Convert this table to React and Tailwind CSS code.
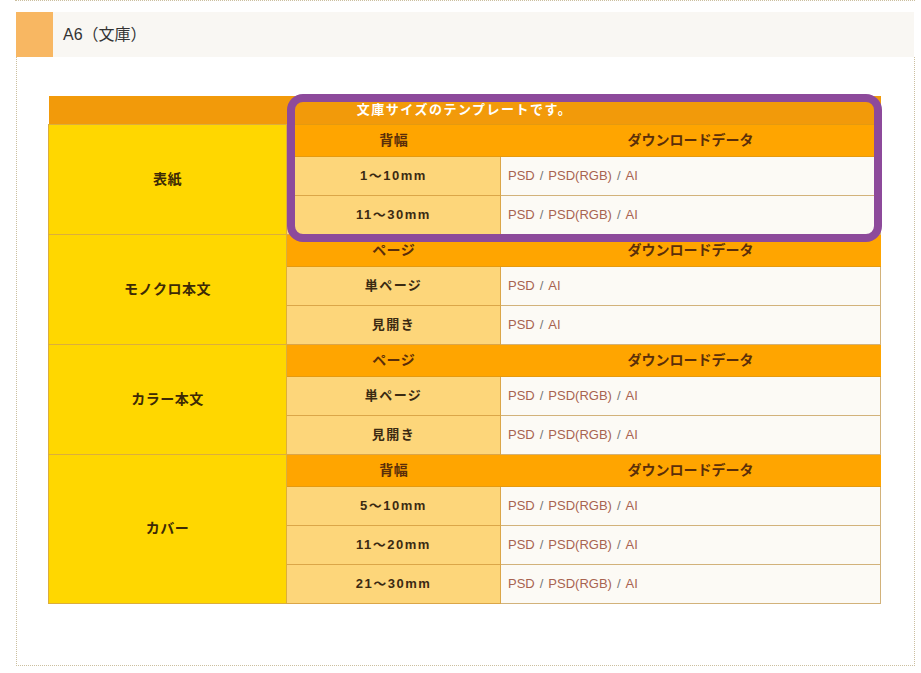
import React from "react";

const sections = [
  {
    name: "表紙",
    head: "背幅",
    rows: [
      { label: "1～10mm", files: ["PSD", "PSD(RGB)", "AI"] },
      { label: "11～30mm", files: ["PSD", "PSD(RGB)", "AI"] },
    ],
  },
  {
    name: "モノクロ本文",
    head: "ページ",
    rows: [
      { label: "単ページ", files: ["PSD", "AI"] },
      { label: "見開き", files: ["PSD", "AI"] },
    ],
  },
  {
    name: "カラー本文",
    head: "ページ",
    rows: [
      { label: "単ページ", files: ["PSD", "PSD(RGB)", "AI"] },
      { label: "見開き", files: ["PSD", "PSD(RGB)", "AI"] },
    ],
  },
  {
    name: "カバー",
    head: "背幅",
    rows: [
      { label: "5～10mm", files: ["PSD", "PSD(RGB)", "AI"] },
      { label: "11～20mm", files: ["PSD", "PSD(RGB)", "AI"] },
      { label: "21～30mm", files: ["PSD", "PSD(RGB)", "AI"] },
    ],
  },
];

const font = { fontFamily: '"Liberation Sans", "Noto Sans CJK JP", sans-serif' };

export default function App() {
  return (
    <div className="relative h-[673px] w-[921px] overflow-hidden bg-white" style={font}>
      <div className="ml-[15px] w-[900px] border-t border-dotted border-[#cbbf9f] pt-[11px]">
        <div className="ml-[1px] flex h-[45px] w-[898px] bg-[#f9f7f3]">
          <div className="w-[37px] bg-[#f8b762]" />
          <div className="flex items-center pl-[10px] text-[16px] text-[#333]">A6（文庫）</div>
        </div>
      </div>
      <div className="ml-[16px] h-[609px] w-[899px] border-x border-b border-dotted border-[#cbbf9f] pl-[31px] pt-[39px]">
        <table className="w-[832px] table-fixed border-collapse text-[13px]">
          <colgroup>
            <col className="w-[238px]" />
            <col className="w-[214px]" />
            <col className="w-[380px]" />
          </colgroup>
          <tbody>
            <tr>
              <td colSpan={3} className="h-[28px] bg-[#f29a0a] pt-[4px] text-center align-top font-bold tracking-[1.5px] text-white">
                文庫サイズのテンプレートです。
              </td>
            </tr>
            {sections.map((s) => (
              <React.Fragment key={s.name}>
                <tr>
                  <td rowSpan={s.rows.length + 1} className="border border-[#dcae3c] bg-[#ffd700] text-center text-[14px] font-bold tracking-[0.5px] text-[#3d2a06]">
                    {s.name}
                  </td>
                  <td className="h-[32px] border-y border-[#e59a10] bg-[#ffa500] text-center text-[14px] font-bold tracking-[0.5px] text-[#5a2e0a]">{s.head}</td>
                  <td className="h-[32px] border-y border-[#e59a10] bg-[#ffa500] text-center text-[14px] font-bold text-[#5a2e0a]">ダウンロードデータ</td>
                </tr>
                {s.rows.map((r) => (
                  <tr key={r.label}>
                    <td className="h-[39px] border border-[#dba648] bg-[#fdd67a] text-center font-bold tracking-[1.5px] text-[#3b2a12]">{r.label}</td>
                    <td className="h-[39px] border border-[#d2b27a] bg-[#fcfaf5] pl-[7px] text-[#a86350]">
                      {r.files.map((f, i) => (
                        <span key={f}>
                          {i > 0 ? <span className="mx-[5px] text-[#777]">/</span> : null}
                          {f}
                        </span>
                      ))}
                    </td>
                  </tr>
                ))}
              </React.Fragment>
            ))}
          </tbody>
        </table>
      </div>
      <div className="absolute left-[287px] top-[94px] h-[148px] w-[595px] rounded-[16px] border-[8px] border-[#8d4a9b]" />
    </div>
  );
}
